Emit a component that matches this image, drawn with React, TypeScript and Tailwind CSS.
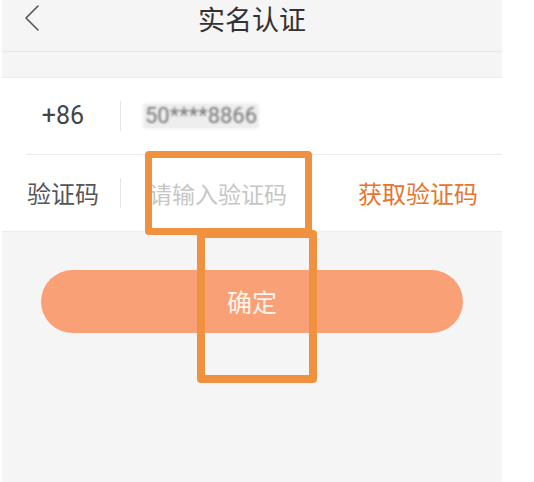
import { useState } from 'react'

const cjk = "font-['Noto_Sans_CJK_SC','Noto_Sans',sans-serif]"

export default function App() {
  const [code, setCode] = useState('')

  return (
    <div className={`relative h-[482px] w-[534px] overflow-hidden bg-white ${cjk}`}>
      <div className="ml-[2px] flex h-full w-[500px] flex-col bg-[#f5f5f5]">
        <header className="relative flex h-[52px] shrink-0 items-center justify-center border-b border-[#e6e6e6]">
          <button className="absolute left-[20px] top-[4px] text-[#555]" aria-label="返回">
            <svg width="20" height="28" viewBox="0 0 20 28" fill="none">
              <path d="M16 2 L4 14 L16 26" stroke="currentColor" strokeWidth="1.6" strokeLinecap="round" strokeLinejoin="round" />
            </svg>
          </button>
          <h1 className="-mt-[15px] text-[27px] leading-none text-[#333]">实名认证</h1>
        </header>

        <div className="h-[26px] shrink-0 border-b border-[#ececec]" />

        <section className="shrink-0 bg-white">
          <div className="flex h-[76px] items-center pl-[24px]">
            <span className="w-[74px] text-center font-['Roboto',sans-serif] text-[25px] text-[#444]">+86</span>
            <span className="ml-[20px] h-[30px] w-px bg-[#e5e5e5]" />
            <span className="ml-[22px] select-none rounded-sm bg-[#eeeeee] px-[2px] font-['Roboto',sans-serif] text-[22px] leading-[26px] text-[#777] blur-[1.2px]">
              50****8866
            </span>
          </div>
          <div className="ml-[24px] h-px bg-[#ececec]" />
          <div className="flex h-[76px] items-center pl-[24px] pr-[24px]">
            <span className="w-[74px] text-center text-[24px] text-[#555]">验证码</span>
            <span className="ml-[20px] h-[30px] w-px bg-[#e5e5e5]" />
            <input
              value={code}
              onChange={(e) => setCode(e.target.value)}
              placeholder="请输入验证码"
              className={`ml-[28px] w-[160px] bg-transparent text-[23px] text-[#333] outline-none placeholder:text-[#c6c6c6] ${cjk}`}
            />
            <button className="ml-auto text-[24px] text-[#e8742f]">获取验证码</button>
          </div>
        </section>

        <div className="border-t border-[#ececec] px-[39px] pt-[38px]">
          <button className="flex h-[63px] w-full items-center justify-center rounded-full bg-[#f9a077] text-[25px] text-[#fff4ec]">
            确定
          </button>
        </div>
      </div>

      {/* annotation boxes */}
      <div className="absolute left-[145px] top-[151px] h-[84px] w-[167px] rounded-[4px] border-[7px] border-[#f0913f]" />
      <div className="absolute left-[197px] top-[230px] h-[153px] w-[120px] rounded-[4px] border-[8px] border-[#f0913f]" />
    </div>
  )
}
